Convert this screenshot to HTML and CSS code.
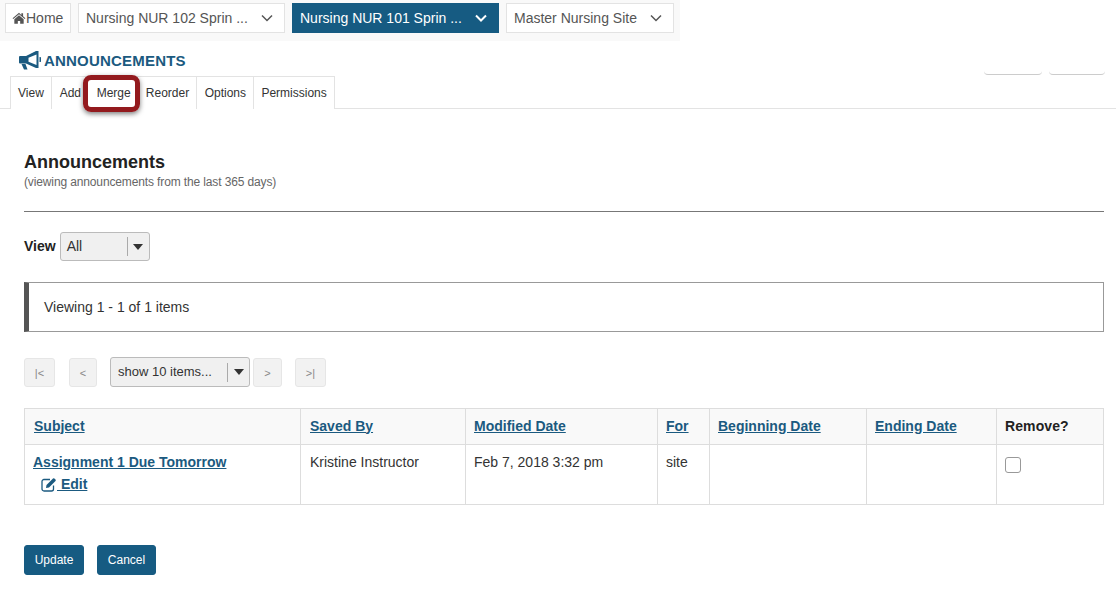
FILE: index.html
```html
<!DOCTYPE html>
<html lang="en">
<head>
<meta charset="utf-8">
<title>Announcements</title>
<link rel="stylesheet" href="styles.css">
</head>
<body>
<div class="topwrap">
  <nav class="sites">
    <a class="site home"><svg class="homeicon" viewBox="0 0 24 20"><path d="M12 1 1 10.500l1.200 1.300L12 3.600l9.800 8.200 1.200-1.300-4-3.400V2h-3v2.700L12 1Zm0 4.300L4 12v8h6v-5h4v5h6v-8l-8-6.700Z" fill="#555"/></svg>Home</a>
    <a class="site course w207"><span>Nursing NUR 102 Sprin ...</span><svg class="chev" viewBox="0 0 12 8"><path d="M1 1.500 6 6.500l5-5" fill="none" stroke="#555" stroke-width="1.500"/></svg></a>
    <a class="site course w207 active"><span>Nursing NUR 101 Sprin ...</span><svg class="chev" viewBox="0 0 12 8"><path d="M1 1.500 6 6.500l5-5" fill="none" stroke="#fff" stroke-width="2"/></svg></a>
    <a class="site course w168"><span>Master Nursing Site</span><svg class="chev" viewBox="0 0 12 8"><path d="M1 1.500 6 6.500l5-5" fill="none" stroke="#555" stroke-width="1.500"/></svg></a>
  </nav>
</div>
<div class="toolhead">
  <h1 class="tooltitle"><svg class="megaphone" viewBox="0 0 22 20"><path fill-rule="evenodd" d="M1 6h6l10-5h2.500v17H17L7 13.500H1a1 1 0 0 1-1-1V7a1 1 0 0 1 1-1Zm8.500 1.800v4l8 3.200V4.500L9.500 7.800ZM20.500 7a2.500 2.500 0 0 1 0 5V7ZM2.500 14h4l2 5.500H5L2.500 14Z" fill="#1b5a80"/></svg>ANNOUNCEMENTS</h1>
  <div class="ghosts"><span class="ghost g58"></span><span class="ghost g56"></span></div>
</div>
<div class="tabbar">
  <ul class="tabs">
    <li class="t41">View</li>
    <li class="t37">Add</li>
    <li class="t50">Merge</li>
    <li class="t59">Reorder</li>
    <li class="t57">Options</li>
    <li class="t80">Permissions</li>
  </ul>
  <span class="callout"></span>
</div>
<main class="content">
  <h2 class="heading">Announcements</h2>
  <p class="sub">(viewing announcements from the last 365 days)</p>
  <hr class="rule">
  <div class="viewrow">
    <label class="viewlabel">View</label>
    <div class="select s90"><span class="seltext">All</span><span class="selarrow"><i></i></span></div>
  </div>
  <div class="notice">Viewing 1 - 1 of 1 items</div>
  <div class="pager">
    <button class="pg p31">|&lt;</button>
    <button class="pg p28 m14">&lt;</button>
    <div class="select s140"><span class="seltext">show 10 items...</span><span class="selarrow"><i></i></span></div>
    <button class="pg p29 m3">&gt;</button>
    <button class="pg p31 m13">&gt;|</button>
  </div>
  <table class="grid">
    <colgroup>
      <col class="c1"><col class="c2"><col class="c3"><col class="c4"><col class="c5"><col class="c6"><col class="c7">
    </colgroup>
    <thead>
      <tr>
        <th class="wide"><a>Subject</a></th>
        <th class="wide"><a>Saved By</a></th>
        <th><a>Modified Date</a></th>
        <th><a>For</a></th>
        <th><a>Beginning Date</a></th>
        <th><a>Ending Date</a></th>
        <th class="plain">Remove?</th>
      </tr>
    </thead>
    <tbody>
      <tr>
        <td class="subject">
          <a class="subjlink">Assignment 1 Due Tomorrow</a>
          <div class="editrow"><a class="edit"><svg class="editicon" viewBox="0 0 16 15"><path d="M12.500 8.500v3.500a2 2 0 0 1-2 2H3a2 2 0 0 1-2-2V4.500a2 2 0 0 1 2-2h6" fill="none" stroke="#1b5a80" stroke-width="1.300"/><path d="M5.500 8 12 1.500a1 1 0 0 1 1.400 0l1.100 1.100a1 1 0 0 1 0 1.400L8 10.500l-3 .5.500-3Z" fill="#1b5a80"/></svg> Edit</a></div>
        </td>
        <td class="wide">Kristine Instructor</td>
        <td>Feb 7, 2018 3:32 pm</td>
        <td>site</td>
        <td></td>
        <td></td>
        <td><span class="check"></span></td>
      </tr>
    </tbody>
  </table>
  <div class="actions">
    <button class="act a60">Update</button>
    <button class="act a59">Cancel</button>
  </div>
</main>
</body>
</html>
```
FILE: styles.css
```css
* { box-sizing: border-box; }
html, body { margin: 0; padding: 0; }
body {
  background: #fff;
  color: #222;
  font-family: "Liberation Sans", Arial, sans-serif;
  font-size: 14px;
  width: 1116px;
  height: 597px;
  overflow: hidden;
}
a { color: inherit; }

.topwrap { height: 41px; }
.sites {
  width: 680px;
  height: 41px;
  padding: 3px 0 0 5px;
  background: #f9f9f9;
  display: flex;
  gap: 7px;
  align-items: flex-start;
}
.site {
  height: 30px;
  background: #fff;
  border: 1px solid #e3e3e3;
  color: #555;
  display: flex;
  align-items: center;
  font-size: 14px;
}
.home { width: 66px; padding-left: 6px; }
.homeicon { width: 14px; height: 12px; margin-top: -1px; }
.course { padding: 0 11px 0 7px; justify-content: space-between; }
.w207 { width: 207px; }
.w168 { width: 168px; }
.active { background: #165b82; border-color: #165b82; color: #fff; }
.chev { width: 12px; height: 8px; }

.toolhead {
  height: 35px;
  display: flex;
  justify-content: space-between;
}
.tooltitle {
  margin: 0;
  padding: 9px 0 0 19px;
  display: flex;
  align-items: center;
  height: 29px;
  color: #1b5a80;
  font-size: 15px;
  font-weight: bold;
  letter-spacing: .2px;
}
.megaphone { width: 22px; height: 20px; margin-right: 3px; }
.ghosts { display: flex; gap: 7px; padding-right: 11px; height: 34px; align-self: flex-start; }
.ghost {
  height: 34px;
  border-bottom: 1px solid #ccc;
  border-radius: 0 0 4px 4px;
}
.g58 { width: 58px; }
.g56 { width: 56px; }

.tabbar {
  position: relative;
  height: 33px;
  border-bottom: 1px solid #e3e3e3;
  padding-left: 10px;
}
.tabs {
  list-style: none;
  margin: 0;
  padding: 0;
  display: flex;
  height: 33px;
  width: 325px;
  border: 1px solid #e3e3e3;
  border-bottom: 0;
  background: #fff;
}
.tabs li {
  display: flex;
  align-items: center;
  justify-content: center;
  height: 32px;
  font-size: 12px;
  color: #333;
  border-right: 1px solid #e3e3e3;
}
.tabs .t41 { width: 41px; }
.tabs .t37 { width: 37px; border-right: 0; }
.tabs .t50 { width: 50px; border-right: 0; }
.tabs .t59 { width: 59px; }
.tabs .t57 { width: 57px; }
.tabs .t80 { width: 80px; border-right: 0; }
.callout {
  position: absolute;
  left: 83px;
  top: -1px;
  width: 57px;
  height: 37px;
  border: 5px solid #931a1e;
  border-radius: 8px;
  box-shadow: 0 2px 5px rgba(0,0,0,.5);
}

.content { padding: 0 12px 0 24px; }
.heading {
  margin: 0;
  padding-top: 43px;
  font-size: 18px;
  line-height: 21px;
  color: #222;
  font-weight: bold;
}
.sub {
  margin: 0;
  font-size: 12px;
  line-height: 18px;
  color: #666;
  letter-spacing: -.13px;
}
.rule {
  margin: 20px 0 0;
  border: 0;
  border-top: 1px solid #777;
}
.viewrow {
  display: flex;
  align-items: center;
  gap: 4px;
  margin-top: 20px;
}
.viewlabel { font-weight: bold; font-size: 14px; padding-bottom: 2px; }
.select {
  height: 29px;
  background: #f0f0f0;
  border: 1px solid #bbb;
  border-radius: 3px;
  display: flex;
  align-items: center;
  justify-content: space-between;
  font-size: 14px;
  color: #333;
}
.s90 { width: 90px; }
.s140 { width: 140px; height: 30px; font-size: 13px; margin-left: 13px; }
.seltext { padding: 0 0 2px 6px; }
.s140 .seltext { padding-left: 7px; }
.selarrow {
  width: 22px;
  height: 19px;
  border-left: 1px solid #aaa;
  display: flex;
  align-items: center;
  justify-content: center;
}
.selarrow i {
  width: 0;
  height: 0;
  border-left: 5.500px solid transparent;
  border-right: 5.500px solid transparent;
  border-top: 6px solid #333;
}
.notice {
  margin-top: 21px;
  height: 50px;
  border: 1px solid #999;
  border-left: 5px solid #555;
  padding-left: 15px;
  display: flex;
  align-items: center;
  font-size: 14px;
  color: #333;
}
.pager {
  margin-top: 25px;
  display: flex;
  align-items: center;
  height: 30px;
}
.pg {
  height: 29px;
  margin-top: 1px;
  padding: 0;
  background: #f2f2f2;
  border: 1px solid #e6e6e6;
  border-radius: 3px;
  color: #888;
  font-family: inherit;
  font-size: 11px;
}
.p31 { width: 31px; }
.p28 { width: 28px; }
.p29 { width: 29px; }
.m14 { margin-left: 14px; }
.m3 { margin-left: 3px; }
.m13 { margin-left: 13px; }

.grid {
  margin-top: 21px;
  width: 1079px;
  table-layout: fixed;
  border-collapse: collapse;
  font-size: 14px;
}
.c1 { width: 276px; }
.c2 { width: 165px; }
.c3 { width: 192px; }
.c4 { width: 52px; }
.c5 { width: 157px; }
.c6 { width: 130px; }
.c7 { width: 107px; }
.grid th, .grid td { border: 1px solid #ddd; }
.grid th {
  height: 36px;
  background: #f9f9f9;
  text-align: left;
  padding: 0 8px 2px;
  font-weight: bold;
  color: #1b5a80;
}
.grid th.wide, .grid td.wide { padding-left: 9px; }
.grid th a { text-decoration: underline; }
.grid th.plain { color: #222; text-decoration: none; letter-spacing: .1px; }
.grid td {
  height: 60px;
  vertical-align: top;
  padding: 9px 8px 0;
  color: #333;
}
.subjlink {
  color: #1b5a80;
  font-weight: bold;
  text-decoration: underline;
}
.editrow { margin: 6px 0 0 8px; }
.edit {
  color: #1b5a80;
  font-weight: bold;
  text-decoration: underline;
}
.editicon { width: 16px; height: 15px; vertical-align: -3px; }
.check {
  display: block;
  width: 16px;
  height: 16px;
  margin-top: 3px;
  border: 1px solid #999;
  border-radius: 3px;
  background: #fff;
}
.actions {
  margin-top: 40px;
  display: flex;
  gap: 13px;
}
.act {
  height: 30px;
  padding: 0;
  background: #165b82;
  border: 1px solid #165b82;
  border-radius: 3px;
  color: #fff;
  font-family: inherit;
  font-size: 12px;
}
.a60 { width: 60px; }
.a59 { width: 59px; }
```
